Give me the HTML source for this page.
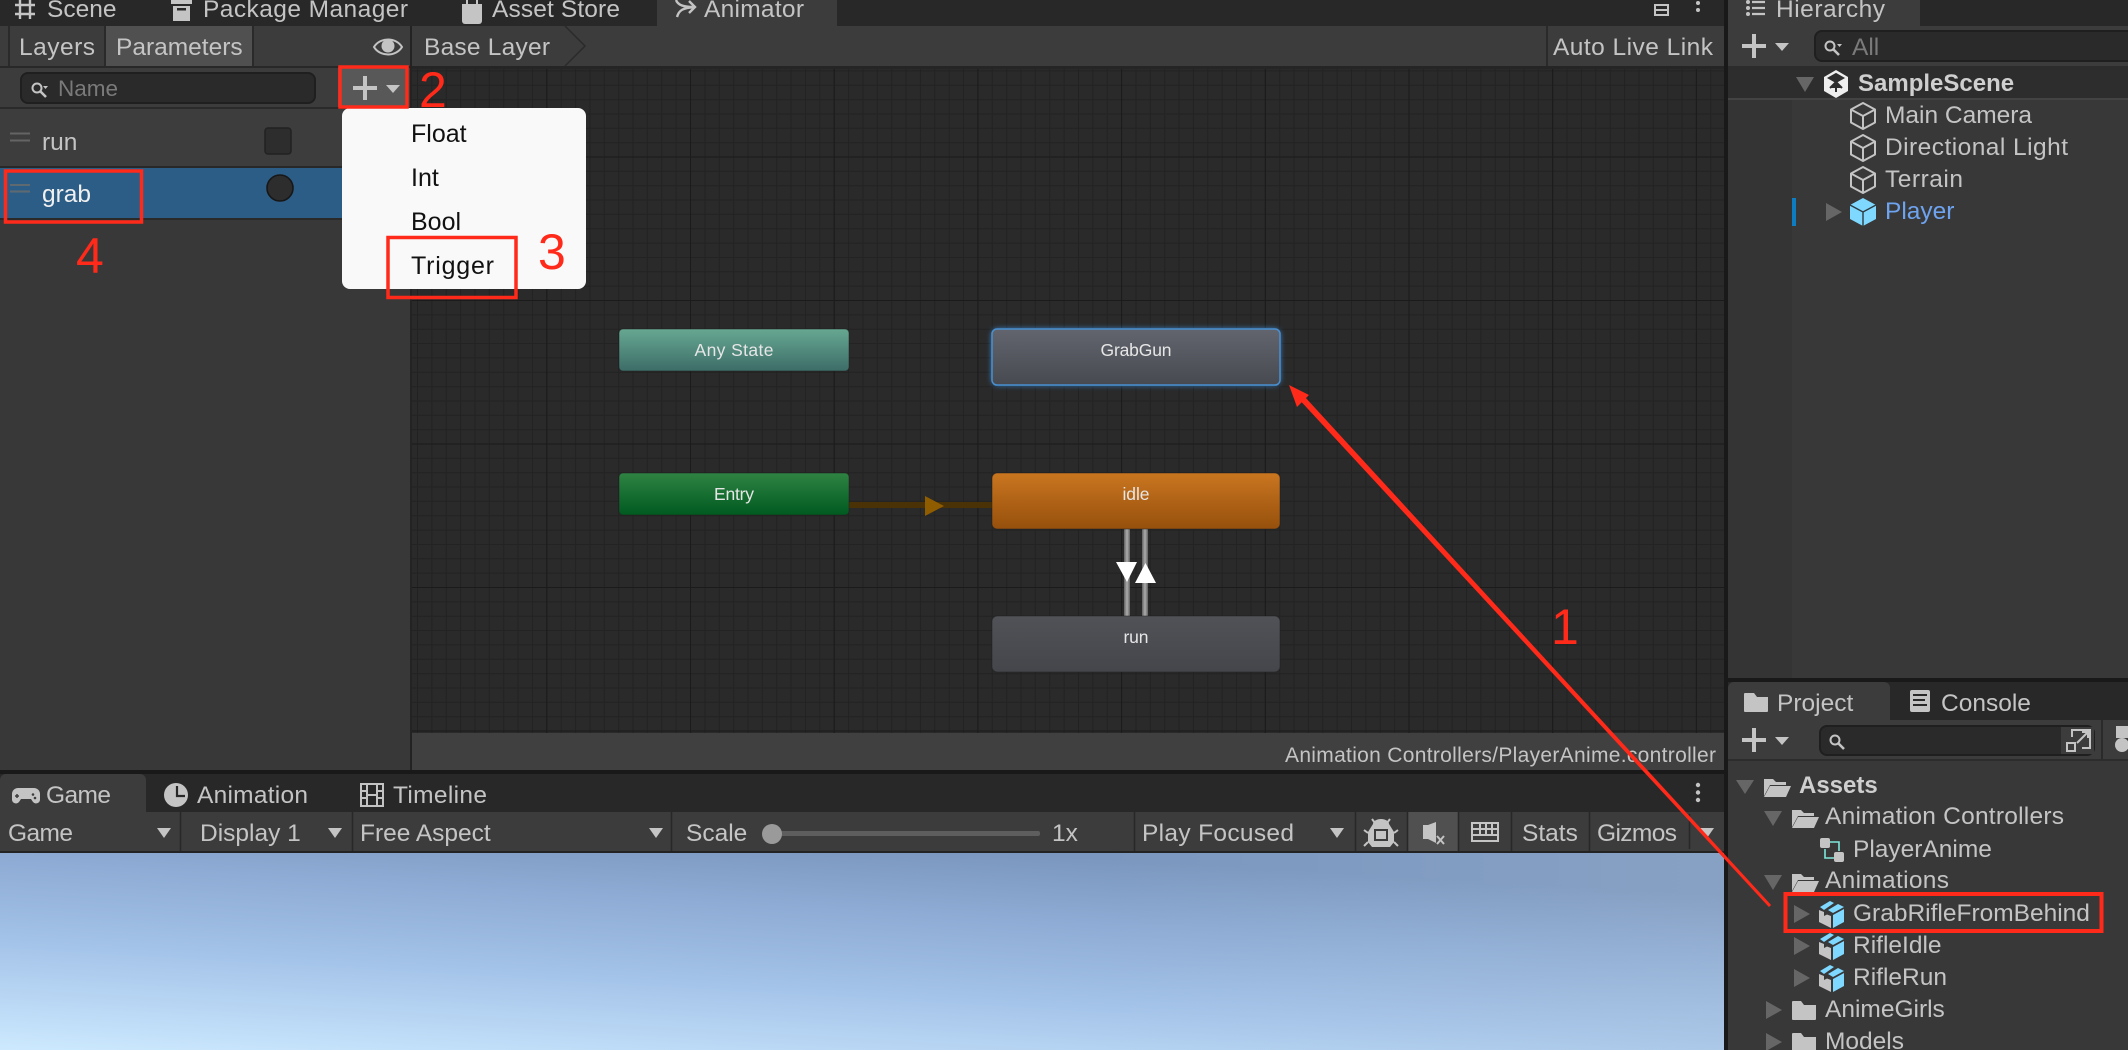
<!DOCTYPE html>
<html><head><meta charset="utf-8"><style>
html,body{margin:0;padding:0;background:#282828;overflow:hidden}
svg{display:block}
text{font-family:"Liberation Sans",sans-serif;font-size:24.5px;fill:#c4c4c4}
.s{font-size:17.5px;fill:#e6e6e6;text-anchor:middle}
.b{font-weight:bold;font-size:24px;fill:#cfcfcf}
.r{fill:#ff2a1a;font-size:50px}
.m{fill:#111;font-size:25px}
.ic{fill:#c4c4c4}
</style></head><body>
<svg width="2128" height="1050" viewBox="0 0 2128 1050" xmlns="http://www.w3.org/2000/svg">
<defs>
<linearGradient id="sky" gradientUnits="userSpaceOnUse" x1="1000" y1="853" x2="985" y2="1110"><stop offset="0" stop-color="#7b97bf"/><stop offset=".25" stop-color="#8dabd4"/><stop offset=".58" stop-color="#a5c4e9"/><stop offset="1" stop-color="#cdeaff"/></linearGradient>
<linearGradient id="skyR" gradientUnits="userSpaceOnUse" x1="1100" y1="0" x2="1724" y2="0"><stop offset="0" stop-color="#c8d8e0" stop-opacity="0"/><stop offset="1" stop-color="#c8d8e0" stop-opacity=".16"/></linearGradient>
<linearGradient id="gAny" x1="0" y1="0" x2="0" y2="1"><stop offset="0" stop-color="#67a892"/><stop offset="1" stop-color="#3d6d68"/></linearGradient>
<linearGradient id="gEntry" x1="0" y1="0" x2="0" y2="1"><stop offset="0" stop-color="#2f8443"/><stop offset="1" stop-color="#005a20"/></linearGradient>
<linearGradient id="gIdle" x1="0" y1="0" x2="0" y2="1"><stop offset="0" stop-color="#ca7620"/><stop offset="1" stop-color="#96500c"/></linearGradient>
<linearGradient id="gGrab" x1="0" y1="0" x2="0" y2="1"><stop offset="0" stop-color="#62656e"/><stop offset="1" stop-color="#474a50"/></linearGradient>
<linearGradient id="gRun" x1="0" y1="0" x2="0" y2="1"><stop offset="0" stop-color="#505257"/><stop offset="1" stop-color="#44464b"/></linearGradient>
<filter id="glow" x="-10%" y="-30%" width="120%" height="160%"><feGaussianBlur stdDeviation="3"/></filter>
<g id="cube"><path d="M13 1L25 7.5V20.5L13 27L1 20.5V7.5ZM1 7.5L13 14L25 7.5M13 14V27" fill="none" stroke="#c4c4c4" stroke-width="2" stroke-linejoin="round"/></g>
<g id="prefab"><path d="M1 10L6 12V16L9 14.500L13 16V28L1 22Z" fill="#c4c4c4"/><path d="M15 15L26 9V22L15 28Z" fill="#7ed8ff"/><path d="M2 7L12 1L16 3L6 10Z" fill="#7ed8ff"/><path d="M15 13L10 10L20 4L26 7Z" fill="#7ed8ff"/></g>
<g id="foldo"><path d="M0 19V2H9L12 5H22V8H6L0 19Z" fill="#c4c4c4"/><path d="M0 20L6 9H27L22 20Z" fill="#c4c4c4"/></g>
<g id="foldc"><path d="M0 2a1 1 0 0 1 1-1H9L12 5H24V19a1 1 0 0 1-1 1H1a1 1 0 0 1-1-1Z" fill="#c4c4c4"/></g>
<g id="plus"><rect x="10" y="0" width="4" height="24" fill="#c4c4c4"/><rect x="0" y="10" width="24" height="4" fill="#c4c4c4"/><path d="M33 9H47L40 17Z" fill="#c4c4c4"/></g>
<g id="mag"><circle cx="6" cy="6" r="4.5" fill="none" stroke="#c4c4c4" stroke-width="2"/><path d="M9.5 9.5L15 15" stroke="#c4c4c4" stroke-width="2.6"/></g>
</defs>

<rect width="2128" height="1050" fill="#191919"/>

<!-- Top tab bar -->
<rect x="0" y="0" width="1724" height="26" fill="#282828"/>
<rect x="657" y="0" width="180" height="26" fill="#3c3c3c"/>
<path d="M20 0V19M30 0V19M15 5H35M15 14H35" stroke="#c4c4c4" stroke-width="2.4" fill="none"/>
<text x="47" y="17">Scene</text>
<path d="M171 0H192V4H171ZM173 6H190V21H173Z" fill="#c4c4c4"/><rect x="177" y="8" width="9" height="2.5" fill="#282828"/>
<text x="203" y="17" textLength="205">Package Manager</text>
<path d="M462 4H482V21a3 3 0 0 1-3 3H465a3 3 0 0 1-3-3Z" fill="#c4c4c4"/><path d="M467 0V6M477 0V6" stroke="#c4c4c4" stroke-width="2"/>
<text x="492" y="17" textLength="128">Asset Store</text>
<path d="M677 17C679 10 683 8 694 7M676 0C678 5 683 7 694 7M689 1L695 7L689 13" fill="none" stroke="#c4c4c4" stroke-width="2.4"/>
<text x="704" y="17" textLength="100">Animator</text>
<path d="M1655 5H1668V15H1655ZM1655 10H1668" stroke="#c4c4c4" stroke-width="2" fill="none"/>
<circle cx="1698" cy="3" r="2" fill="#c4c4c4"/><circle cx="1698" cy="10" r="2" fill="#c4c4c4"/>

<!-- Left panel -->
<rect x="0" y="26" width="410" height="744" fill="#383838"/>
<rect x="0" y="26" width="410" height="40" fill="#3c3c3c"/>
<rect x="106" y="26" width="146" height="40" fill="#505050"/>
<rect x="8" y="26" width="2" height="40" fill="#2a2a2a"/><rect x="104" y="26" width="2" height="40" fill="#2a2a2a"/><rect x="252" y="26" width="2" height="40" fill="#2a2a2a"/>
<rect x="0" y="66" width="410" height="2" fill="#282828"/>
<text x="19" y="55" textLength="76">Layers</text>
<text x="116" y="55">Parameters</text>
<path d="M374 47C380 37 396 37 402 47C396 57 380 57 374 47Z" fill="none" stroke="#c4c4c4" stroke-width="2"/><circle cx="388" cy="46" r="6.5" fill="#c4c4c4"/>
<rect x="0" y="68" width="410" height="40" fill="#3c3c3c"/>
<rect x="0" y="107" width="410" height="2" fill="#2a2a2a"/>
<rect x="21" y="73" width="294" height="30" rx="7" fill="#2a2a2a" stroke="#1f1f1f" stroke-width="2"/>
<use href="#mag" x="31" y="82"/>
<path d="M43 86H48L45.500 89Z" fill="#c4c4c4"/>
<text x="58" y="96" style="fill:#7a7a7a;font-size:22.500px">Name</text>
<rect x="338" y="67" width="70" height="40" fill="#585858"/>
<use href="#plus" x="353" y="76"/>
<rect x="0" y="109" width="410" height="57" fill="#3d3d3d"/>
<rect x="0" y="166" width="410" height="2" fill="#282828"/>
<rect x="0" y="168" width="410" height="50" fill="#2c5d87"/>
<rect x="0" y="218" width="410" height="2" fill="#2a2a2a"/>
<path d="M10 133.500H30M10 140.500H30" stroke="#646464" stroke-width="2"/>
<path d="M10 185H30M10 191.500H30" stroke="#5f6a70" stroke-width="2"/>
<text x="42" y="150">run</text>
<text x="42" y="202" style="fill:#f0f0f0">grab</text>
<rect x="265" y="128" width="26" height="26" rx="3" fill="#2d2d2d" stroke="#222" stroke-width="1.500"/>
<circle cx="280" cy="188" r="13" fill="#2d2d2d" stroke="#171717" stroke-width="1.600"/>

<!-- Graph -->
<rect x="410" y="26" width="2" height="744" fill="#232323"/>
<rect x="412" y="68" width="1312" height="665" fill="#2a2a2a"/>
<line x1="412" y1="400.500" x2="1724" y2="400.500" stroke="#232323" stroke-width="665" stroke-dasharray="1 13.37" stroke-dashoffset="9.4"/>
<line x1="1068" y1="68" x2="1068" y2="733" stroke="#232323" stroke-width="1312" stroke-dasharray="1 13.35" stroke-dashoffset="11.95"/>
<line x1="412" y1="400.500" x2="1724" y2="400.500" stroke="#1b1b1b" stroke-width="665" stroke-dasharray="1 142.7" stroke-dashoffset="9.4"/>
<line x1="1068" y1="68" x2="1068" y2="733" stroke="#1b1b1b" stroke-width="1312" stroke-dasharray="1 142.5" stroke-dashoffset="55"/>
<rect x="412" y="26" width="1312" height="40" fill="#3c3c3c"/>
<rect x="412" y="66" width="1312" height="3" fill="#252525"/>
<path d="M565 26L585 46L565 66" fill="none" stroke="#2a2a2a" stroke-width="1.500"/>
<text x="424" y="55" textLength="126">Base Layer</text>
<rect x="1546" y="26" width="2" height="40" fill="#2a2a2a"/>
<text x="1553" y="55" textLength="160">Auto Live Link</text>

<!-- transitions -->
<rect x="849" y="502" width="143" height="6" fill="#4a3206"/>
<path d="M925 496L944 506L925 516Z" fill="#8f5c00"/>
<rect x="1124" y="529" width="6" height="87" fill="#6e6e6e"/><rect x="1125.500" y="529" width="3" height="87" fill="#a0a0a0"/>
<rect x="1142" y="529" width="6" height="87" fill="#6e6e6e"/><rect x="1143.500" y="529" width="3" height="87" fill="#a0a0a0"/>
<path d="M1116 562H1137L1127 582Z" fill="#fff"/>
<path d="M1135 583H1156L1145.500 563Z" fill="#fff"/>

<!-- nodes -->
<rect x="992" y="329" width="288" height="56" rx="6" fill="#3a8fe0" filter="url(#glow)"/>
<rect x="619" y="329" width="230" height="42" rx="4" fill="url(#gAny)" stroke="#1f1f1f" stroke-opacity=".5"/>
<rect x="992" y="329" width="288" height="56" rx="5" fill="url(#gGrab)" stroke="#4a90d0" stroke-width="1.500"/>
<rect x="619" y="473" width="230" height="42" rx="4" fill="url(#gEntry)" stroke="#1f1f1f" stroke-opacity=".5"/>
<rect x="992" y="473" width="288" height="56" rx="5" fill="url(#gIdle)" stroke="#1f1f1f" stroke-opacity=".5"/>
<rect x="992" y="616" width="288" height="56" rx="5" fill="url(#gRun)" stroke="#1f1f1f" stroke-opacity=".5"/>
<text class="s" x="734" y="356" textLength="79">Any State</text>
<text class="s" x="1136" y="356" textLength="71">GrabGun</text>
<text class="s" x="734" y="500" textLength="40">Entry</text>
<text class="s" x="1136" y="500" textLength="27">idle</text>
<text class="s" x="1136" y="643" textLength="25">run</text>

<!-- status bar -->
<rect x="412" y="733" width="1312" height="37" fill="#404040"/>
<text x="1285" y="762" textLength="431" style="font-size:21px">Animation Controllers/PlayerAnime.controller</text>
<rect x="0" y="770" width="1724" height="4" fill="#191919"/>

<!-- Bottom tabs -->
<rect x="0" y="774" width="1724" height="38" fill="#282828"/>
<path d="M0 812V780a6 6 0 0 1 6-6H140a6 6 0 0 1 6 6V812Z" fill="#3c3c3c"/>
<path d="M18 788H34a6 6 0 0 1 6 6L40 800a4 4 0 0 1-7 2L31 799H21L19 802a4 4 0 0 1-7-2V794a6 6 0 0 1 6-6Z" fill="#c4c4c4"/>
<path d="M17 794V798M15 796H19" stroke="#3c3c3c" stroke-width="1.500"/><circle cx="33" cy="794.500" r="1.300" fill="#3c3c3c"/><circle cx="35" cy="798" r="1.300" fill="#3c3c3c"/>
<text x="46" y="803" textLength="65">Game</text>
<circle cx="176" cy="795" r="12" fill="#c4c4c4"/><path d="M177 786V796H185" stroke="#282828" stroke-width="2.200" fill="none"/>
<text x="197" y="803" textLength="111">Animation</text>
<path d="M361 784H383V806H361Z" fill="none" stroke="#c4c4c4" stroke-width="2"/><path d="M367 784V806M377 784V806M361 791H367M361 798H367M377 791H383M377 798H383M367 795H377" stroke="#c4c4c4" stroke-width="2" fill="none"/>
<text x="393" y="803" textLength="94">Timeline</text>
<circle cx="1698" cy="785" r="2.200" fill="#c4c4c4"/><circle cx="1698" cy="792.500" r="2.200" fill="#c4c4c4"/><circle cx="1698" cy="800" r="2.200" fill="#c4c4c4"/>

<!-- Game toolbar -->
<rect x="0" y="812" width="1724" height="39" fill="#3c3c3c"/>
<rect x="0" y="851" width="1724" height="2" fill="#232323"/>
<rect x="1408" y="812" width="50" height="39" fill="#505050"/>
<path d="M180.500 812V851M352.500 812V851M671.500 812V851M1134.500 812V851M1355.500 812V851M1407.500 812V851M1458.500 812V851M1511.500 812V851M1589.500 812V851M1689.500 814V849" stroke="#282828" stroke-width="1.600"/>
<text x="8" y="841" textLength="65">Game</text>
<path d="M157 828H171L164 838Z" class="ic"/>
<text x="200" y="841">Display 1</text>
<path d="M328 828H342L335 838Z" class="ic"/>
<text x="360" y="841">Free Aspect</text>
<path d="M649 828H663L656 838Z" class="ic"/>
<text x="686" y="841">Scale</text>
<rect x="772" y="831" width="268" height="5" rx="2" fill="#5e5e5e"/>
<circle cx="772" cy="834" r="10" fill="#9a9a9a"/>
<text x="1052" y="841">1x</text>
<text x="1142" y="841" textLength="152">Play Focused</text>
<path d="M1330 828H1344L1337 838Z" class="ic"/>
<!-- bug -->
<path d="M1373 824a8 5 0 0 1 16 0L1394 832V842L1390 847H1372L1368 842V832Z" class="ic"/><rect x="1375" y="830" width="12" height="10" fill="none" stroke="#3c3c3c" stroke-width="2"/><path d="M1372 819L1375 823M1390 819L1387 823M1368 833L1364 830M1394 833L1398 830M1368 842L1364 846M1394 842L1398 846" stroke="#c4c4c4" stroke-width="2"/>
<!-- mute -->
<path d="M1423 825H1428L1436 822V843L1428 839H1423Z" class="ic"/><path d="M1437 836L1444 844M1444 836L1437 844" stroke="#c4c4c4" stroke-width="2"/>
<!-- grid -->
<path d="M1472 823H1498V841H1472ZM1472 829H1498M1472 835H1498M1480 823V835M1486 823V835M1492 823V835" fill="none" stroke="#c4c4c4" stroke-width="2"/>
<text x="1522" y="841">Stats</text>
<text x="1597" y="841" textLength="80">Gizmos</text>
<path d="M1700 828H1714L1707 838Z" class="ic"/>

<!-- Game view -->
<rect x="0" y="853" width="1724" height="197" fill="url(#sky)"/>
<rect x="1100" y="853" width="624" height="197" fill="url(#skyR)"/>

<!-- Right column: Hierarchy -->
<rect x="1728" y="0" width="400" height="26" fill="#282828"/>
<rect x="1728" y="0" width="192" height="26" fill="#3c3c3c"/>
<path d="M1752 2H1765M1752 8H1765M1752 14H1765" stroke="#c4c4c4" stroke-width="2.200"/><circle cx="1748" cy="8" r="2" fill="#c4c4c4"/><circle cx="1748" cy="14" r="2" fill="#c4c4c4"/><circle cx="1748" cy="2" r="2" fill="#c4c4c4"/>
<text x="1776" y="17" textLength="109">Hierarchy</text>
<rect x="1728" y="26" width="400" height="40" fill="#3c3c3c"/>
<use href="#plus" x="1742" y="34"/>
<rect x="1815" y="31" width="330" height="30" rx="7" fill="#2a2a2a" stroke="#1f1f1f" stroke-width="2"/>
<use href="#mag" x="1824" y="40"/>
<path d="M1837 44H1842L1839.500 47Z" class="ic"/>
<text x="1852" y="55" style="fill:#7a7a7a">All</text>
<rect x="1728" y="66" width="400" height="4" fill="#2c2c2c"/>
<rect x="1728" y="70" width="400" height="28" fill="#2d2d2d"/>
<rect x="1728" y="98" width="400" height="2" fill="#434343"/>
<rect x="1728" y="100" width="400" height="578" fill="#383838"/>
<rect x="1728" y="100" width="64" height="578" fill="#343434"/>
<path d="M1796 77H1814L1805 92Z" fill="#666"/>
<path d="M1836 70L1848 77V91L1836 98L1824 91V77Z" fill="#eee"/><path d="M1829 78L1836 74L1843 78L1836 82ZM1836 82V92M1830 88L1836 82L1842 88" fill="#2d2d2d" stroke="#2d2d2d" stroke-width="2"/>
<text class="b" x="1858" y="91">SampleScene</text>
<use href="#cube" x="1850" y="102"/><text x="1885" y="123">Main Camera</text>
<use href="#cube" x="1850" y="134"/><text x="1885" y="155" textLength="183">Directional Light</text>
<use href="#cube" x="1850" y="166"/><text x="1885" y="187" textLength="78">Terrain</text>
<rect x="1792" y="198" width="4" height="28" fill="#0d7cc1"/>
<path d="M1826 203L1842 212L1826 221Z" fill="#666"/>
<path d="M1863 198L1876 205V219L1863 226L1850 219V205Z" fill="#7ed8ff"/><path d="M1850 205L1863 212L1876 205M1863 212V226" fill="none" stroke="#2d3a40" stroke-width="1.400"/>
<text x="1885" y="219" style="fill:#6ea3ef">Player</text>

<!-- Project -->
<rect x="1728" y="678" width="400" height="4" fill="#191919"/>
<rect x="1728" y="682" width="400" height="38" fill="#282828"/>
<path d="M1728 720V688a6 6 0 0 1 6-6H1884a6 6 0 0 1 6 6V720Z" fill="#3c3c3c"/>
<path d="M1744 694a1 1 0 0 1 1-1H1754L1757 697H1768V711a1 1 0 0 1-1 1H1745a1 1 0 0 1-1-1Z" class="ic"/>
<text x="1777" y="711">Project</text>
<rect x="1910" y="690" width="20" height="22" rx="2" class="ic"/><path d="M1913 695H1927M1913 700H1925M1913 705H1927" stroke="#282828" stroke-width="2"/>
<text x="1941" y="711">Console</text>
<rect x="1728" y="720" width="400" height="39" fill="#3c3c3c"/>
<rect x="1728" y="759" width="400" height="2" fill="#2c2c2c"/>
<use href="#plus" x="1742" y="728"/>
<rect x="1820" y="726" width="274" height="29" rx="7" fill="#2a2a2a" stroke="#1f1f1f" stroke-width="2"/>
<rect x="2061" y="727" width="33" height="27" fill="#3c3c3c"/>
<use href="#mag" x="1829" y="734"/>
<path d="M2072 737V730H2090V748H2082M2077 743L2088 732M2082 732H2088V738" fill="none" stroke="#c4c4c4" stroke-width="2"/><rect x="2067" y="743" width="8" height="8" fill="none" stroke="#c4c4c4" stroke-width="2"/>
<rect x="2101" y="720" width="2" height="39" fill="#2a2a2a"/>
<rect x="2116" y="726" width="12" height="12" class="ic"/><circle cx="2122" cy="745" r="7" class="ic"/>
<rect x="1728" y="761" width="400" height="289" fill="#383838"/>

<path d="M1736 780H1754L1745 794Z" fill="#666"/>
<use href="#foldo" x="1764" y="777"/>
<text class="b" x="1799" y="793">Assets</text>
<path d="M1764 811H1782L1773 826Z" fill="#666"/>
<use href="#foldo" x="1792" y="808"/>
<text x="1825" y="824" textLength="239">Animation Controllers</text>
<rect x="1820" y="838" width="10" height="10" rx="2" class="ic"/><rect x="1834" y="852" width="10" height="10" rx="2" class="ic"/>
<path d="M1830 842H1839V851M1825 849V858H1834" fill="none" stroke="#7fe8da" stroke-width="1.600"/>
<text x="1853" y="857">PlayerAnime</text>
<path d="M1764 875H1782L1773 890Z" fill="#666"/>
<use href="#foldo" x="1792" y="872"/>
<text x="1825" y="888" textLength="124">Animations</text>
<path d="M1794 905L1810 914L1794 923Z" fill="#666"/>
<use href="#prefab" x="1818" y="900"/>
<text x="1853" y="921">GrabRifleFromBehind</text>
<path d="M1794 937L1810 946L1794 955Z" fill="#666"/>
<use href="#prefab" x="1818" y="932"/>
<text x="1853" y="953">RifleIdle</text>
<path d="M1794 969L1810 978L1794 987Z" fill="#666"/>
<use href="#prefab" x="1818" y="964"/>
<text x="1853" y="985">RifleRun</text>
<path d="M1766 1001L1782 1010L1766 1019Z" fill="#666"/>
<use href="#foldc" x="1792" y="1000"/>
<text x="1825" y="1017">AnimeGirls</text>
<path d="M1766 1033L1782 1042L1766 1051Z" fill="#666"/>
<use href="#foldc" x="1792" y="1032"/>
<text x="1825" y="1049">Models</text>

<!-- Dropdown menu -->
<rect x="342" y="108" width="244" height="181" rx="8" fill="#f9f9f9"/>
<text class="m" x="411" y="142">Float</text>
<text class="m" x="411" y="186">Int</text>
<text class="m" x="411" y="230">Bool</text>
<text class="m" x="411" y="274" textLength="83">Trigger</text>

<!-- Red annotations -->
<g fill="none" stroke="#ff2a1a" stroke-width="3.500">
<rect x="340" y="67" width="67" height="40"/>
<rect x="5.500" y="171" width="136" height="51"/>
<rect x="388" y="237.500" width="128" height="60"/>
<rect x="1785.500" y="894" width="316" height="37" stroke-width="4"/>
</g>
<text class="r" x="419" y="107">2</text>
<text class="r" x="538" y="269">3</text>
<text class="r" x="76" y="273">4</text>
<text class="r" x="1551" y="644">1</text>
<path d="M1289 385L1309 395L1297 407Z" fill="#ff2a1a"/>
<path d="M1302.200 394L1771.100 905L1768.900 907L1297.800 398Z" fill="#ff2a1a"/>
</svg>
</body></html>
